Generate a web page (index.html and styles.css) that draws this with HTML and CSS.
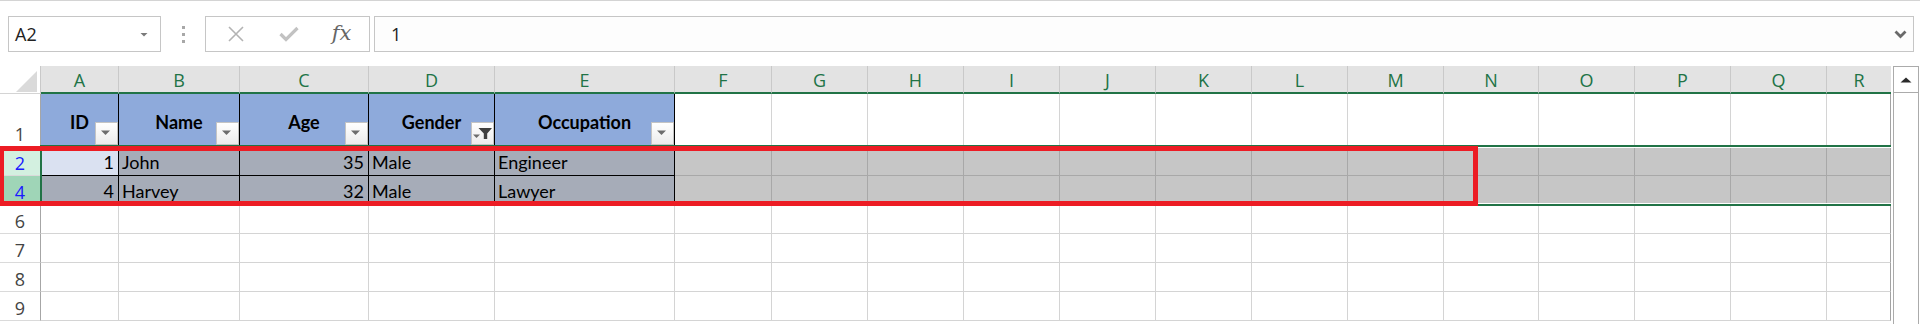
FILE: index.html
```html
<!DOCTYPE html>
<html lang="en">
<head>
<meta charset="utf-8">
<title>Sheet</title>
<link rel="stylesheet" href="styles.css">
</head>
<body>
<div class="formula-bar">
  <div class="name-box"><span>A2</span><svg class="nb-arrow" width="8" height="5" viewBox="0 0 8 5"><polygon points="0.5,1 7.5,1 4,4.5" fill="#7a7a7a"/></svg></div>
  <div class="grip"><i></i><i></i><i></i></div>
  <div class="fx-box">
    <span class="fx-slot"><svg width="18" height="18" viewBox="0 0 18 18"><path d="M2 2 L16 16 M16 2 L2 16" stroke="#b3b3b3" stroke-width="1.6" fill="none"/></svg></span>
    <span class="fx-slot"><svg width="20" height="16" viewBox="0 0 20 16"><path d="M1.5 8 L7 13.5 L18.5 2" stroke="#c2c2c2" stroke-width="3.2" fill="none"/></svg></span>
    <span class="fx-slot fx-text">fx</span>
  </div>
  <div class="formula-input"><span>1</span><svg width="13" height="9" viewBox="0 0 13 9"><path d="M1.5 1.5 L6.5 6.5 L11.5 1.5" stroke="#6a6a6a" stroke-width="2.8" fill="none"/></svg></div>
</div>

<div class="sheet">
  <div class="grid">
    <!-- column headers -->
    <div class="c corner"><span class="corner-tri"></span></div>
    <div class="c ch">A</div><div class="c ch">B</div><div class="c ch">C</div><div class="c ch">D</div><div class="c ch">E</div>
    <div class="c ch">F</div><div class="c ch">G</div><div class="c ch">H</div><div class="c ch">I</div><div class="c ch">J</div>
    <div class="c ch">K</div><div class="c ch">L</div><div class="c ch">M</div><div class="c ch">N</div><div class="c ch">O</div>
    <div class="c ch">P</div><div class="c ch">Q</div><div class="c ch ch-last">R</div>

    <!-- row 1 -->
    <div class="c rh">1</div>
    <div class="c th">ID<span class="fb"><svg width="21" height="21" viewBox="0 0 21 21"><polygon points="5,7.5 14,7.5 9.5,12" fill="#6d6d6d"/></svg></span></div>
    <div class="c th">Name<span class="fb"><svg width="21" height="21" viewBox="0 0 21 21"><polygon points="5,7.5 14,7.5 9.5,12" fill="#6d6d6d"/></svg></span></div>
    <div class="c th">Age<span class="fb"><svg width="21" height="21" viewBox="0 0 21 21"><polygon points="5,7.5 14,7.5 9.5,12" fill="#6d6d6d"/></svg></span></div>
    <div class="c th">Gender<span class="fb"><svg width="21" height="21" viewBox="0 0 21 21"><polygon points="6.5,5 20,5 15.2,10.5 15.2,16 11.8,16 11.8,10.5" fill="#3f3f3f"/><polygon points="1,11.5 8,11.5 4.5,15" fill="#6d6d6d"/></svg></span></div>
    <div class="c th">Occupation<span class="fb"><svg width="21" height="21" viewBox="0 0 21 21"><polygon points="5,7.5 14,7.5 9.5,12" fill="#6d6d6d"/></svg></span></div>
    <div class="c"></div><div class="c"></div><div class="c"></div><div class="c"></div><div class="c"></div>
    <div class="c"></div><div class="c"></div><div class="c"></div><div class="c"></div><div class="c"></div>
    <div class="c"></div><div class="c"></div><div class="c last"></div>

    <!-- row 2 -->
    <div class="c rh sel-light">2</div>
    <div class="c td num active">1</div>
    <div class="c td">John</div>
    <div class="c td num">35</div>
    <div class="c td">Male</div>
    <div class="c td">Engineer</div>
    <div class="c sg"></div><div class="c sg"></div><div class="c sg"></div><div class="c sg"></div><div class="c sg"></div>
    <div class="c sg"></div><div class="c sg"></div><div class="c sg"></div><div class="c sg"></div><div class="c sg"></div>
    <div class="c sg"></div><div class="c sg"></div><div class="c sg last"></div>

    <!-- row 4 -->
    <div class="c rh sel-dark">4</div>
    <div class="c td num">4</div>
    <div class="c td">Harvey</div>
    <div class="c td num">32</div>
    <div class="c td">Male</div>
    <div class="c td">Lawyer</div>
    <div class="c sg"></div><div class="c sg"></div><div class="c sg"></div><div class="c sg"></div><div class="c sg"></div>
    <div class="c sg"></div><div class="c sg"></div><div class="c sg"></div><div class="c sg"></div><div class="c sg"></div>
    <div class="c sg"></div><div class="c sg"></div><div class="c sg last"></div>

    <!-- row 6 -->
    <div class="c rh">6</div>
    <div class="c"></div><div class="c"></div><div class="c"></div><div class="c"></div><div class="c"></div>
    <div class="c"></div><div class="c"></div><div class="c"></div><div class="c"></div><div class="c"></div>
    <div class="c"></div><div class="c"></div><div class="c"></div><div class="c"></div><div class="c"></div>
    <div class="c"></div><div class="c"></div><div class="c last"></div>

    <!-- row 7 -->
    <div class="c rh">7</div>
    <div class="c"></div><div class="c"></div><div class="c"></div><div class="c"></div><div class="c"></div>
    <div class="c"></div><div class="c"></div><div class="c"></div><div class="c"></div><div class="c"></div>
    <div class="c"></div><div class="c"></div><div class="c"></div><div class="c"></div><div class="c"></div>
    <div class="c"></div><div class="c"></div><div class="c last"></div>

    <!-- row 8 -->
    <div class="c rh">8</div>
    <div class="c"></div><div class="c"></div><div class="c"></div><div class="c"></div><div class="c"></div>
    <div class="c"></div><div class="c"></div><div class="c"></div><div class="c"></div><div class="c"></div>
    <div class="c"></div><div class="c"></div><div class="c"></div><div class="c"></div><div class="c"></div>
    <div class="c"></div><div class="c"></div><div class="c last"></div>

    <!-- row 9 -->
    <div class="c rh">9</div>
    <div class="c"></div><div class="c"></div><div class="c"></div><div class="c"></div><div class="c"></div>
    <div class="c"></div><div class="c"></div><div class="c"></div><div class="c"></div><div class="c"></div>
    <div class="c"></div><div class="c"></div><div class="c"></div><div class="c"></div><div class="c"></div>
    <div class="c"></div><div class="c"></div><div class="c last"></div>

    <!-- overlays -->
    <div class="selection"></div>
    <div class="red-box"></div>
  </div>

  <div class="vscroll">
    <div class="vs-up"><svg width="12" height="6" viewBox="0 0 12 6"><polygon points="0.5,5.5 11.5,5.5 6,0.5" fill="#2b2b2b"/></svg></div>
  </div>
</div>
</body>
</html>
```

FILE: styles.css
```css
html, body {
  margin: 0;
  padding: 0;
}

body {
  width: 1920px;
  height: 324px;
  overflow: hidden;
  background: #ffffff;
  font-family: Lato, "Liberation Sans", sans-serif;
  color: #000;
}

/* ---------- formula bar ---------- */
.formula-bar {
  height: 66px;
  box-sizing: border-box;
  border-top: 1px solid #d4d4d4;
  padding: 15px 6px 0 8px;
  display: flex;
  align-items: flex-start;
}

.name-box {
  width: 153px;
  height: 36px;
  box-sizing: border-box;
  border: 1px solid #c6c6c6;
  display: flex;
  align-items: center;
  justify-content: space-between;
  padding: 0 12px 0 6px;
  font-family: "Open Sans", sans-serif;
  font-size: 18px;
  color: #222;
}

.grip {
  width: 44px;
  height: 36px;
  display: flex;
  flex-direction: column;
  align-items: center;
  justify-content: center;
  gap: 4px;
}

.grip i {
  display: block;
  width: 3px;
  height: 3px;
  background: #a8a8a8;
}

.fx-box {
  width: 165px;
  height: 36px;
  box-sizing: border-box;
  border: 1px solid #c6c6c6;
  display: flex;
  align-items: center;
  padding-left: 3px;
}

.fx-slot {
  width: 53px;
  height: 34px;
  display: flex;
  align-items: center;
  justify-content: center;
}

.fx-text {
  font-family: "DejaVu Serif", "Liberation Serif", serif;
  font-style: italic;
  font-size: 21px;
  color: #666666;
  letter-spacing: 0;
  padding-bottom: 3px;
  box-sizing: border-box;
}

.formula-input {
  flex: 1;
  margin-left: 4px;
  height: 36px;
  box-sizing: border-box;
  border: 1px solid #c6c6c6;
  display: flex;
  align-items: center;
  justify-content: space-between;
  padding: 0 6px 0 16px;
  font-family: "Open Sans", sans-serif;
  font-size: 18px;
  color: #222;
  background: #fdfdfd;
}

/* ---------- sheet ---------- */
.sheet {
  display: flex;
  align-items: flex-start;
}

.grid {
  position: relative;
  display: grid;
  grid-template-columns: 41px 78px 121px 129px 126px 180px 97px repeat(7, 96px) 95px 96px 96px 96px 64px;
  grid-template-rows: 28px 53px 29px 29px 29px 29px 29px 29px;
}

.c {
  box-sizing: border-box;
  border-right: 1px solid #d4d4d4;
  border-bottom: 1px solid #d4d4d4;
  min-width: 0;
  overflow: hidden;
  white-space: nowrap;
}

.c.last {
  border-right-color: #a3a3a3;
}

/* corner */
.corner {
  border-right: 1px solid #c9c9c9;
  border-bottom: 1px solid #d4d4d4;
  display: flex;
  justify-content: flex-end;
  align-items: flex-end;
  padding: 0 3px 1px 0;
}

.corner-tri {
  display: block;
  width: 0;
  height: 0;
  border-style: solid;
  border-width: 0 0 21px 21px;
  border-color: transparent transparent #dadada transparent;
}

/* column headers */
.ch {
  background: #e3e3e3;
  border-right: 1px solid #c9c9c9;
  border-bottom: 2px solid #217346;
  color: #217346;
  font-family: "Open Sans", sans-serif;
  font-size: 18px;
  display: flex;
  align-items: center;
  justify-content: center;
  padding-top: 1px;
}

.ch-last {
  border-right: none;
}

/* row headers */
.rh {
  border-right: 1px solid #a6a6a6;
  border-bottom: 1px solid #dadada;
  font-family: "Open Sans", sans-serif;
  font-size: 18px;
  color: #444;
  display: flex;
  justify-content: center;
  align-items: flex-end;
  padding-bottom: 0;
}

.rh.sel-light {
  background: #d3f0e0;
  color: #1a1aff;
  border-right-color: #217346;
}

.rh.sel-dark {
  background: #9fd5b7;
  color: #1a1aff;
  border-right-color: #217346;
}

/* table header row */
.th {
  position: relative;
  background: #8eaadb;
  border-right: 1px solid #000;
  border-bottom: 1px solid #000;
  font-weight: 700;
  font-size: 18px;
  display: flex;
  align-items: center;
  justify-content: center;
  padding-top: 3px;
}

.fb {
  position: absolute;
  right: 0;
  bottom: 1px;
  width: 23px;
  height: 23px;
  box-sizing: border-box;
  border: 1px solid #c4c4c4;
  background: linear-gradient(#ffffff, #ececec);
  display: flex;
}

/* table data */
.td {
  background: #a6acb8;
  border-right: 1px solid #000;
  border-bottom: 1px solid #000;
  font-size: 18px;
  display: flex;
  align-items: center;
  padding: 1px 3px 0 3px;
}

.td.num {
  justify-content: flex-end;
  padding-right: 4px;
}

.td.active {
  background: #dae1f1;
}

/* selected rows outside table */
.sg {
  background: #c6c6c6;
  border-right-color: #a8a8a8;
  border-bottom-color: #a8a8a8;
}

/* overlays */
.selection {
  position: absolute;
  left: 40px;
  top: 79px;
  width: 1851px;
  height: 61px;
  box-sizing: border-box;
  border-top: 2px solid #217346;
  border-bottom: 2px solid #217346;
  border-left: 2px solid #217346;
  box-shadow: inset 0 1px 0 #ffffff, inset 0 -1px 0 #ffffff;
  pointer-events: none;
}

.red-box {
  position: absolute;
  left: 0;
  top: 80px;
  width: 1478px;
  height: 60px;
  box-sizing: border-box;
  border: 5px solid #ec1c24;
  border-left-width: 4px;
  pointer-events: none;
}

/* vertical scrollbar */
.vscroll {
  margin-left: 2px;
  width: 26px;
  height: 258px;
  box-sizing: border-box;
  border: 1px solid #ababab;
  border-bottom: none;
  background: #fff;
}

.vs-up {
  height: 26px;
  box-sizing: border-box;
  border-bottom: 1px solid #ababab;
  display: flex;
  align-items: center;
  justify-content: center;
}
```
